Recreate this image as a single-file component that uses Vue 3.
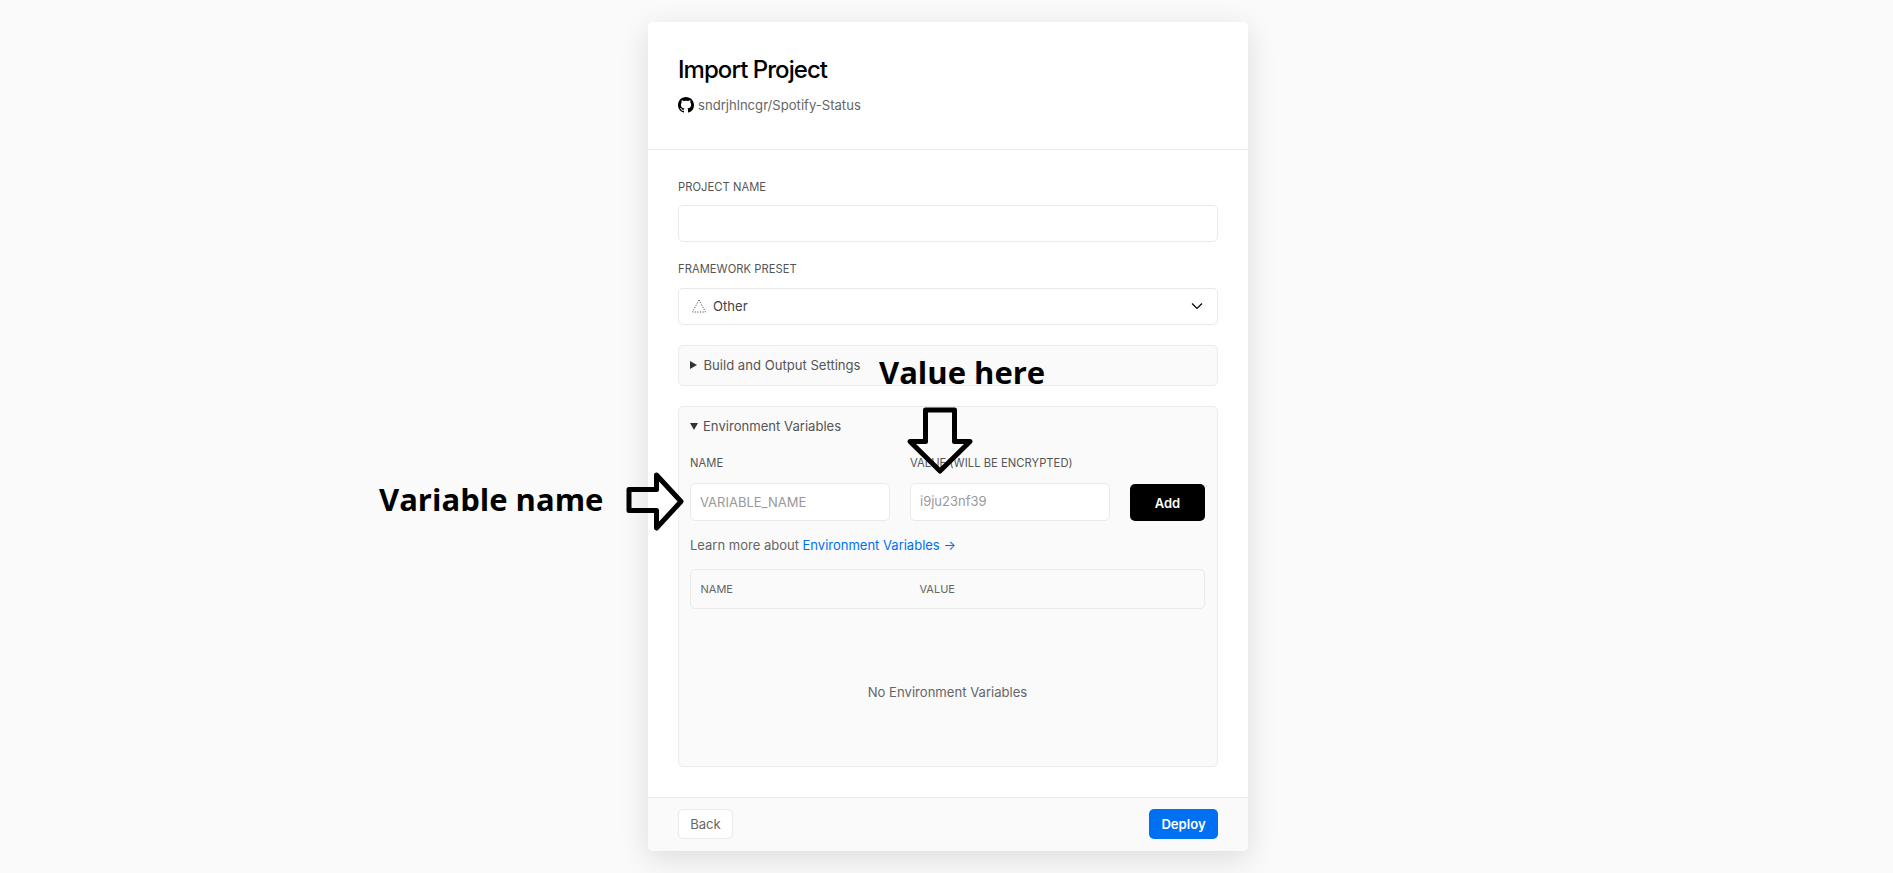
<script setup>
const ghPath = 'M8 0C3.58 0 0 3.58 0 8c0 3.54 2.29 6.53 5.47 7.59.4.07.55-.17.55-.38 0-.19-.01-.82-.01-1.49-2.01.37-2.53-.49-2.69-.94-.09-.23-.48-.94-.82-1.13-.28-.15-.68-.52-.01-.53.63-.01 1.08.58 1.23.82.72 1.21 1.87.87 2.33.66.07-.52.28-.87.51-1.07-1.78-.2-3.64-.89-3.64-3.95 0-.87.31-1.59.82-2.15-.08-.2-.36-1.02.08-2.12 0 0 .67-.21 2.2.82.64-.18 1.32-.27 2-.27s1.36.09 2 .27c1.53-1.04 2.2-.82 2.2-.82.44 1.1.16 1.92.08 2.12.51.56.82 1.27.82 2.15 0 3.07-1.87 3.75-3.65 3.95.29.25.54.73.54 1.48 0 1.07-.01 1.93-.01 2.2 0 .21.15.46.55.38A8.01 8.01 0 0 0 16 8c0-4.42-3.58-8-8-8z'
</script>

<template>
  <div class="page">
    <main class="card">
      <header class="head">
        <h1 class="title">Import Project</h1>
        <div class="repo">
          <svg class="gh" viewBox="0 0 16 16" width="16" height="16"><path :d="ghPath" fill="#000" /></svg>
          <span>sndrjhlncgr/Spotify-Status</span>
        </div>
      </header>

      <section class="body">
        <label class="label">PROJECT NAME</label>
        <input class="field" type="text" />

        <label class="label label-next">FRAMEWORK PRESET</label>
        <div class="field select">
          <svg class="tri" viewBox="0 0 14 14" width="14" height="14"><path d="M7 1 L13.5 13 H0.5 Z" fill="none" stroke="#333" stroke-width="1" stroke-dasharray="1 1.6" /></svg>
          <span class="other">Other</span>
          <svg class="chev" viewBox="0 0 16 16" width="16" height="16"><path d="M3 5.5 L8 10.5 L13 5.5" fill="none" stroke="#000" stroke-width="1.2" /></svg>
        </div>

        <div class="panel build">
          <span class="caret right"></span>
          <span>Build and Output Settings</span>
        </div>

        <div class="panel env">
          <div class="env-title">
            <span class="caret down"></span>
            <span>Environment Variables</span>
          </div>
          <div class="env-grid">
            <div class="col">
              <label class="label">NAME</label>
              <input class="field small" type="text" placeholder="VARIABLE_NAME" />
            </div>
            <div class="col">
              <label class="label">VALUE (WILL BE ENCRYPTED)</label>
              <input class="field small value" type="text" placeholder="i9ju23nf39" />
            </div>
            <button class="add">Add</button>
          </div>
          <p class="learn">Learn more about <a class="link">Environment Variables →</a></p>
          <div class="thead">
            <span class="th-name">NAME</span>
            <span>VALUE</span>
          </div>
          <div class="empty">No Environment Variables</div>
        </div>
      </section>

      <footer class="foot">
        <button class="back">Back</button>
        <button class="deploy">Deploy</button>
      </footer>
    </main>

    <div class="note note-value">Value here</div>
    <div class="note note-name">Variable name</div>
    <svg class="arrow arrow-down" viewBox="0 0 70 70" width="70" height="70">
      <path d="M20.5 3 H49.5 V34.5 H65 L35 64 L5 34.5 H20.5 Z" fill="none" stroke="#000" stroke-width="5" stroke-linejoin="round" />
    </svg>
    <svg class="arrow arrow-right" viewBox="0 0 62 62" width="62" height="62">
      <path d="M4 18.5 H31.5 V4 L56 30.5 L31.5 57 V39.5 H4 Z" fill="none" stroke="#000" stroke-width="5" stroke-linejoin="round" />
    </svg>
  </div>
</template>

<style>
html, body { margin: 0; background: #fafafa; }
</style>

<style scoped>
.page {
  position: relative;
  box-sizing: border-box;
  height: 873px;
  padding: 22px 0 22px 3px;
  background: #fafafa;
  overflow: hidden;
  font-family: Inter, "Liberation Sans", sans-serif;
  font-size: 13.1px;
  color: #555;
}
.card {
  width: 600px;
  height: 829px;
  margin: 0 auto;
  display: flex;
  flex-direction: column;
  background: #fff;
  border-radius: 5px;
  box-shadow: 0 8px 30px rgba(0, 0, 0, 0.12);
  overflow: hidden;
}
.head {
  height: 128px;
  flex: none;
  box-sizing: border-box;
  padding: 30px 30px 0;
  border-bottom: 1px solid #eaeaea;
}
.title {
  margin: 0;
  font-size: 24px;
  line-height: 36px;
  font-weight: 500;
  letter-spacing: -0.95px;
  color: #000;
}
.repo {
  display: flex;
  align-items: center;
  gap: 4px;
  margin-top: 7px;
  height: 20px;
  color: #666;
}
.body {
  flex: 1;
  padding: 29px 30px 0;
  display: flex;
  flex-direction: column;
}
.label {
  display: block;
  font-size: 11.2px;
  font-weight: 400;
  letter-spacing: 0.05px;
  line-height: 16px;
  height: 16px;
  margin-bottom: 10px;
  color: #555;
}
.label-next { margin-top: 19px; margin-bottom: 11px; }
.field {
  display: flex;
  align-items: center;
  flex: none;
  box-sizing: border-box;
  width: 100%;
  height: 37px;
  padding: 0 10px;
  border: 1px solid #eaeaea;
  border-radius: 5px;
  background: #fff;
  font-family: inherit;
  font-size: 13.1px;
  outline: none;
}
.field::placeholder { color: #999; }
.select { padding: 0 12px 1px 13px; color: #444; }
.tri { flex: none; }
.other { margin-left: 7px; flex: 1; }
.panel {
  flex: none;
  box-sizing: border-box;
  border: 1px solid #eaeaea;
  border-radius: 5px;
  background: #fafafa;
}
.build {
  display: flex;
  align-items: center;
  height: 41px;
  margin-top: 20px;
  padding: 0 0 1px 11px;
}
.caret { display: inline-block; width: 0; height: 0; flex: none; }
.caret.right {
  border-top: 4.5px solid transparent;
  border-bottom: 4.5px solid transparent;
  border-left: 7.5px solid #333;
  margin-right: 6.5px;
}
.caret.down {
  border-left: 4.5px solid transparent;
  border-right: 4.5px solid transparent;
  border-top: 7.5px solid #333;
  margin-right: 5px;
}
.env {
  height: 361px;
  margin-top: 20px;
  padding: 9px 12px 0 11px;
  display: flex;
  flex-direction: column;
}
.env-title {
  display: flex;
  align-items: center;
  height: 20px;
}
.env-grid {
  display: flex;
  align-items: flex-end;
  gap: 20px;
  margin-top: 19px;
}
.col { width: 200px; }
.col .label { margin-bottom: 12px; }
.small { height: 38px; font-size: 13px; padding-left: 9px; }
.value { padding-bottom: 2px; }
.add {
  width: 75px;
  height: 37px;
  border: 0;
  border-radius: 5px;
  background: #000;
  color: #fff;
  font-family: inherit;
  font-size: 13px;
  font-weight: 600;
}
.learn {
  margin: 14px 0 0;
  font-size: 13px;
  line-height: 20px;
  color: #666;
}
.link { color: #0070f3; }
.thead {
  display: flex;
  align-items: center;
  flex: none;
  box-sizing: border-box;
  height: 40px;
  margin-top: 14px;
  padding-left: 9.5px;
  border: 1px solid #eaeaea;
  border-radius: 5px;
  font-size: 11px;
  color: #666;
}
.th-name { width: 219px; }
.empty {
  margin-top: 73px;
  line-height: 20px;
  text-align: center;
  color: #666;
}
.foot {
  display: flex;
  align-items: flex-start;
  justify-content: space-between;
  flex: none;
  height: 54px;
  box-sizing: border-box;
  padding: 11px 30px 0;
  border-top: 1px solid #eaeaea;
  background: #fafafa;
}
.back, .deploy {
  height: 30px;
  border-radius: 5px;
  font-family: inherit;
  font-size: 13.1px;
}
.back {
  width: 55px;
  border: 1px solid #eaeaea;
  background: #fff;
  color: #666;
}
.deploy {
  width: 69px;
  border: 0;
  background: #0070f3;
  color: #fff;
  font-weight: 600;
}
.note {
  position: absolute;
  font-family: "Open Sans", sans-serif;
  font-weight: 700;
  font-size: 31px;
  line-height: 36px;
  color: #000;
  white-space: nowrap;
}
.note-value { left: 879px; top: 354px; }
.note-name { left: 379px; top: 481px; }
.arrow { position: absolute; }
.arrow-down { left: 905px; top: 407px; }
.arrow-right { left: 625px; top: 471px; }
</style>
